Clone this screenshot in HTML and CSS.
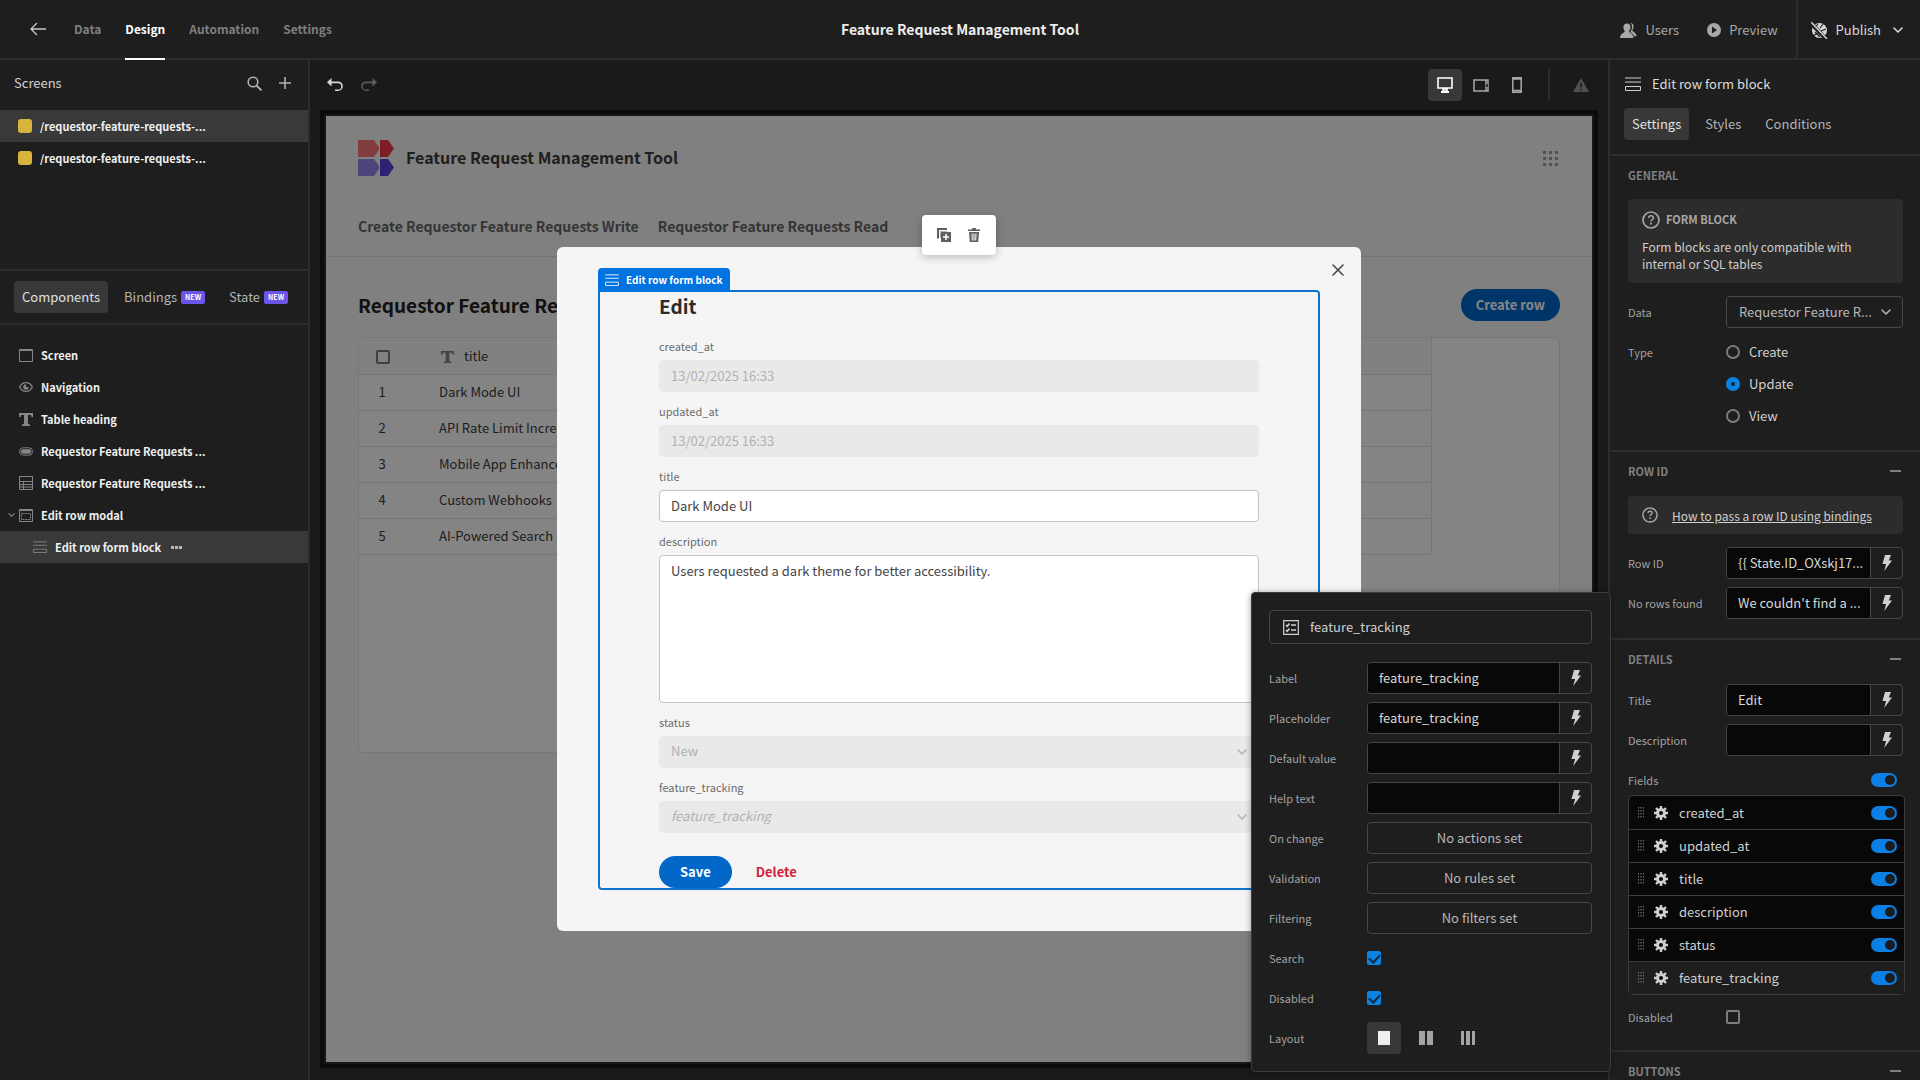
FILE: index.html
```html
<!DOCTYPE html>
<html lang="en">
<head>
<meta charset="UTF-8">
<meta name="viewport" content="width=device-width, initial-scale=1">
<title>Feature Request Management Tool</title>
<link rel="stylesheet" href="styles.css">
</head>
<body>
<!-- shared icons -->
<svg class="sprite" aria-hidden="true">
	<symbol id="i-bolt" viewBox="0 0 12 16"><path d="M4 0h6L7.8 5.500H11L3.200 16l1.900-7H1.500z" fill="currentColor"/></symbol>
	<symbol id="i-chevron" viewBox="0 0 10 6"><path d="M1 1l4 4 4-4" fill="none" stroke="currentColor" stroke-width="1.6" stroke-linecap="round" stroke-linejoin="round"/></symbol>
	<symbol id="i-block" viewBox="0 0 16 14"><path d="M0 1h16M0 5h16M.5 9.5h15v4H.5z" fill="none" stroke="currentColor"/></symbol>
	<symbol id="i-gear" viewBox="0 0 14 14"><path d="M7 0v14M0 7h14M2 2l10 10M12 2L2 12" stroke="currentColor" stroke-width="2.4"/><circle cx="7" cy="7" r="3.6" fill="none" stroke="currentColor" stroke-width="2.8"/><circle cx="7" cy="7" r="2" fill="#080808"/></symbol>
	<symbol id="i-grip" viewBox="0 0 6 12"><path d="M.5 0v12M3 0v12M5.500 0v12" stroke="currentColor" stroke-width="1.200" stroke-dasharray="1.600 1.400" fill="none"/></symbol>
	<symbol id="i-help" viewBox="0 0 18 18"><circle cx="9" cy="9" r="8" fill="none" stroke="currentColor" stroke-width="1.7"/><path d="M6.600 6.900C6.700 5.500 7.700 4.800 9 4.800C10.500 4.800 11.400 5.600 11.400 6.800C11.400 8.500 9 8.500 9 10.500" fill="none" stroke="currentColor" stroke-width="1.500"/><path d="M8.100 11.700h1.800v1.800H8.100z" fill="currentColor"/></symbol>
	<symbol id="i-text" viewBox="0 0 14 13"><path d="M0 0h14v4h-1.500L12 2H9v9l2 .6V13H3v-1.400l2-.6V2H2l-.5 2H0z" fill="currentColor"/></symbol>
</svg>

<header class="topbar">
	<nav class="topnav">
		<a href="#" class="back" aria-label="Back"><svg width="16" height="14" viewBox="0 0 16 14"><path d="M7 1L1 7l6 6M1 7h15" fill="none" stroke="currentColor" stroke-width="1.300"/></svg></a>
		<a href="#">Data</a>
		<a href="#" class="active">Design</a>
		<a href="#">Automation</a>
		<a href="#">Settings</a>
	</nav>
	<h1>Feature Request Management Tool</h1>
	<div class="top-actions">
		<button type="button"><svg width="17" height="15" viewBox="0 0 17 15"><path d="M10.500 0c2 0 3 1.500 3 3.500 0 1.800-.8 3-1.200 3.700 0 1.600 4 2 4.200 6H14c-.6-3-3.500-3-3.500-4.800C11.500 7 12 5.500 12 3.800 12 2 11.500.9 10.500 0zM7 .5c2.300 0 3.500 1.500 3.500 3.600S9.500 7.500 9 8c0 2 4 2 4.500 7H0c.3-5 4.800-5 4.800-7C4.300 7.500 3.400 6.200 3.400 4.100S4.700.5 7 .5z" fill="currentColor"/></svg>Users</button>
		<button type="button"><svg width="14" height="14" viewBox="0 0 14 14"><circle cx="7" cy="7" r="7" fill="currentColor"/><path d="M5 3.500l5 3.500-5 3.500z" fill="#1e1e1e"/></svg>Preview</button>
		<button type="button" class="publish"><svg width="17" height="17" viewBox="0 0 17 17"><circle cx="8.500" cy="8.500" r="7.500" fill="currentColor"/><path d="M3 7l4-5M9 6l3-4M4 10l5 5M10 9l5-2M7 11l-5 3" stroke="#1e1e1e" stroke-width="1.200"/><path d="M0 1l15 16" stroke="#1e1e1e" stroke-width="4"/><path d="M0 0l16 17" stroke="currentColor" stroke-width="1.500"/></svg>Publish<svg class="chev" width="10" height="6"><use href="#i-chevron"/></svg></button>
	</div>
</header>

<div class="workspace">
	<aside class="left">
		<section class="screens">
			<div class="panel-head">
				<h2>Screens</h2>
				<button type="button" aria-label="Search"><svg width="15" height="15" viewBox="0 0 15 15"><circle cx="6" cy="6" r="4.800" fill="none" stroke="currentColor" stroke-width="1.600"/><path d="M9.500 9.500l5 5" stroke="currentColor" stroke-width="1.800"/></svg></button>
				<button type="button" aria-label="Add screen"><svg width="12" height="12" viewBox="0 0 12 12"><path d="M6 0v12M0 6h12" stroke="currentColor" stroke-width="1.600"/></svg></button>
			</div>
			<a href="#" class="screen selected"><i></i>/requestor-feature-requests-...</a>
			<a href="#" class="screen"><i></i>/requestor-feature-requests-...</a>
		</section>
		<div class="tabs left-tabs">
			<button type="button" class="tab on">Components</button>
			<button type="button" class="tab">Bindings<b class="new">NEW</b></button>
			<button type="button" class="tab">State<b class="new">NEW</b></button>
		</div>
		<div class="tree">
			<a href="#" class="node"><svg width="14" height="13" viewBox="0 0 14 13"><path d="M.5.5h13v12H.5zM0 1.500h14" fill="none" stroke="currentColor"/></svg>Screen</a>
			<a href="#" class="node"><svg width="14" height="10" viewBox="0 0 14 10"><path d="M.7 5C2 2 4.500.7 7 .7S12 2 13.300 5C12 8 9.500 9.300 7 9.300S2 8 .7 5z" fill="none" stroke="currentColor" stroke-width="1.300"/><path d="M7 2.200A2.800 2.800 0 1 0 9.800 5H7z" fill="currentColor"/></svg>Navigation</a>
			<a href="#" class="node"><svg width="14" height="13"><use href="#i-text"/></svg>Table heading</a>
			<a href="#" class="node"><svg width="14" height="9" viewBox="0 0 15 9"><rect x=".5" y=".5" width="14" height="8" rx="4" fill="none" stroke="currentColor"/><rect x="2" y="2" width="11" height="5" rx="2.500" fill="currentColor"/></svg>Requestor Feature Requests ...</a>
			<a href="#" class="node"><svg width="14" height="14" viewBox="0 0 14 14"><path d="M.5.5h13v13H.5zM0 5.500h14M0 8.500h14M0 11h14M4.500 5.500v8" fill="none" stroke="currentColor"/></svg>Requestor Feature Requests ...</a>
			<a href="#" class="node"><svg class="twist" width="5" height="3"><use href="#i-chevron"/></svg><svg width="14" height="13" viewBox="0 0 14 13"><path d="M.5.5h13v12H.5zM0 1.500h14" fill="none" stroke="currentColor"/><path d="M2.500 4.500h9v6h-9z" fill="none" stroke="currentColor" stroke-dasharray="2 1"/></svg>Edit row modal</a>
			<a href="#" class="node child selected"><svg width="14" height="12"><use href="#i-block"/></svg>Edit row form block<svg class="more" width="11" height="3" viewBox="0 0 11 3"><path d="M0 0h3v3H0zM4 0h3v3H4zM8 0h3v3H8z" fill="currentColor"/></svg></a>
		</div>
	</aside>

	<main class="canvas">
		<div class="canvas-bar">
			<button type="button" aria-label="Undo"><svg width="16" height="14" viewBox="0 0 16 14"><path d="M4.500 0L0 4.200l4.500 4.200V5.200H11a3.200 3.200 0 0 1 0 6.400H8V13h3a4.800 4.800 0 0 0 0-9.600H4.500z" fill="currentColor"/></svg></button>
			<button type="button" class="dim" aria-label="Redo"><svg width="16" height="14" viewBox="0 0 16 14"><path d="M11.500 0L16 4.200l-4.500 4.200V5.200H5a3.200 3.200 0 0 0 0 6.400h3V13H5a4.800 4.800 0 0 1 0-9.600h6.500z" fill="currentColor"/></svg></button>
			<span class="spacer"></span>
			<button type="button" class="device on" aria-label="Desktop"><svg width="16" height="16" viewBox="0 0 16 16"><path d="M1 1h14v10H1zM6 12h4v2H6z" fill="none" stroke="currentColor" stroke-width="1.600"/><path d="M4 14h8v2H4z" fill="currentColor"/></svg></button>
			<button type="button" class="device" aria-label="Tablet"><svg width="16" height="13" viewBox="0 0 16 13"><path d="M1 1h14v11H1zM13 1v11" fill="none" stroke="currentColor" stroke-width="1.500"/><circle cx="14" cy="6.500" r="1.200" fill="#1a1a1a"/></svg></button>
			<button type="button" class="device" aria-label="Mobile"><svg width="10" height="16" viewBox="0 0 10 16"><path d="M.8.8h8.400v14.400H.8zM1 2h8M1 13.500h8" fill="none" stroke="currentColor" stroke-width="1.500"/></svg></button>
			<span class="bar-line"></span>
			<svg class="warn" width="16" height="14" viewBox="0 0 16 14"><path d="M8 0l8 14H0z" fill="currentColor"/><path d="M8 5v4.500M8 10.700v1.800" stroke="#1a1a1a" stroke-width="1.600"/></svg>
		</div>

		<div class="preview">
			<div class="app">
				<header class="app-head">
					<div class="brand">
						<svg width="36" height="36" viewBox="0 0 36 36"><path d="M0 0h16l5 7v3l-5 7H0z" fill="#f97777"/><path d="M22 0h8l6 8.500-6 8.500h-8z" fill="#f23a46"/><path d="M0 19h16l5 7v3l-5 7H0z" fill="#9387ef"/><path d="M22 19h8l6 8.500-6 8.500h-8z" fill="#5b41dc"/></svg>
						<h2>Feature Request Management Tool</h2>
						<svg class="apps" width="15" height="15" viewBox="0 0 15 15"><path d="M0 1.500h15M0 7.500h15M0 13.500h15" stroke="currentColor" stroke-width="3" stroke-dasharray="3 3"/></svg>
					</div>
					<nav class="app-nav">
						<a href="#">Create Requestor Feature Requests Write</a>
						<a href="#">Requestor Feature Requests Read</a>
					</nav>
				</header>
				<div class="app-title">
					<h3>Requestor Feature Requests</h3>
					<button type="button" class="pill">Create row</button>
				</div>
				<div class="grid">
					<table>
						<thead>
							<tr><th class="num"><input type="checkbox" class="box" aria-label="Select all rows"></th><th><svg width="13" height="12"><use href="#i-text"/></svg>title</th></tr>
						</thead>
						<tbody>
							<tr><td class="num">1</td><td>Dark Mode UI</td></tr>
							<tr><td class="num">2</td><td>API Rate Limit Increase</td></tr>
							<tr><td class="num">3</td><td>Mobile App Enhancements</td></tr>
							<tr><td class="num">4</td><td>Custom Webhooks</td></tr>
							<tr><td class="num">5</td><td>AI-Powered Search</td></tr>
						</tbody>
					</table>
				</div>
			</div>

			<div class="overlay">
				<div class="modal">
					<button type="button" class="close" aria-label="Close"><svg width="12" height="12" viewBox="0 0 12 12"><path d="M1 1l10 10M11 1L1 11" stroke="currentColor" stroke-width="1.600" stroke-linecap="round"/></svg></button>
					<div class="quick">
						<button type="button" aria-label="Duplicate"><svg width="14" height="14" viewBox="0 0 14 14"><path d="M0 0h10v2H2v8.500H0z" fill="currentColor"/><path d="M3 3h7v1H4v6H3z" fill="currentColor" opacity=".5"/><path d="M4 4h10v10H4z" fill="currentColor"/><path d="M9 6v6M6 9h6" stroke="#fff" stroke-width="1.500"/></svg></button>
						<button type="button" aria-label="Delete block"><svg width="12" height="14" viewBox="0 0 12 14"><path d="M0 1.500h3.500L4.500 0h3l1 1.500H12V3H0zM1 4h10l-.8 10H1.800z" fill="currentColor"/><path d="M4 5.500l.3 7M6 5.500v7M8 5.500l-.3 7" stroke="#fff"/></svg></button>
					</div>
					<form class="block">
						<span class="block-tag"><svg width="14" height="12"><use href="#i-block"/></svg>Edit row form block</span>
						<h3>Edit</h3>
						<label for="created">created_at</label>
						<input id="created" type="text" value="13/02/2025 16:33" disabled>
						<label for="updated">updated_at</label>
						<input id="updated" type="text" value="13/02/2025 16:33" disabled>
						<label for="title">title</label>
						<input id="title" type="text" value="Dark Mode UI">
						<label for="desc">description</label>
						<textarea id="desc">Users requested a dark theme for better accessibility.</textarea>
						<label for="status">status</label>
						<div class="pick"><select id="status" disabled><option>New</option></select><svg width="10" height="6"><use href="#i-chevron"/></svg></div>
						<label for="tracking">feature_tracking</label>
						<div class="pick"><select id="tracking" class="empty" disabled><option>feature_tracking</option></select><svg width="10" height="6"><use href="#i-chevron"/></svg></div>
						<div class="form-buttons">
							<button type="button" class="pill">Save</button>
							<button type="button" class="delete">Delete</button>
						</div>
					</form>
				</div>
			</div>
		</div>
	</main>

	<aside class="right">
		<div class="right-head"><svg width="16" height="14"><use href="#i-block"/></svg><h2>Edit row form block</h2></div>
		<div class="tabs right-tabs">
			<button type="button" class="tab on">Settings</button>
			<button type="button" class="tab">Styles</button>
			<button type="button" class="tab">Conditions</button>
		</div>
		<section class="group general">
			<h3>GENERAL</h3>
			<div class="info">
				<strong><svg width="18" height="18"><use href="#i-help"/></svg>FORM BLOCK</strong>
				<p>Form blocks are only compatible with internal or SQL tables</p>
			</div>
			<div class="prop">
				<label for="data">Data</label>
				<div class="pick dark"><select id="data"><option>Requestor Feature R...</option></select><svg width="10" height="6"><use href="#i-chevron"/></svg></div>
			</div>
			<div class="prop top">
				<span class="name">Type</span>
				<div class="radios">
					<label><input type="radio" name="type">Create</label>
					<label><input type="radio" name="type" checked>Update</label>
					<label><input type="radio" name="type">View</label>
				</div>
			</div>
		</section>
		<section class="group rowid">
			<h3>ROW ID<svg width="11" height="2"><path d="M0 1h11" stroke="currentColor" stroke-width="2"/></svg></h3>
			<div class="info link"><svg width="16" height="16"><use href="#i-help"/></svg><a href="#">How to pass a row ID using bindings</a></div>
			<div class="prop"><label for="rowid">Row ID</label><div class="bind"><input id="rowid" type="text" value="{{ State.ID_OXskj17..."><button type="button" aria-label="Bind row ID"><svg width="12" height="16"><use href="#i-bolt"/></svg></button></div></div>
			<div class="prop"><label for="norows">No rows found</label><div class="bind"><input id="norows" type="text" value="We couldn't find a ..."><button type="button" aria-label="Bind no rows found"><svg width="12" height="16"><use href="#i-bolt"/></svg></button></div></div>
		</section>
		<section class="group details">
			<h3>DETAILS<svg width="11" height="2"><path d="M0 1h11" stroke="currentColor" stroke-width="2"/></svg></h3>
			<div class="prop"><label for="ftitle">Title</label><div class="bind"><input id="ftitle" type="text" value="Edit"><button type="button" aria-label="Bind title"><svg width="12" height="16"><use href="#i-bolt"/></svg></button></div></div>
			<div class="prop"><label for="fdesc">Description</label><div class="bind"><input id="fdesc" type="text"><button type="button" aria-label="Bind description"><svg width="12" height="16"><use href="#i-bolt"/></svg></button></div></div>
			<div class="fields-head"><label for="allfields">Fields</label><input type="checkbox" class="switch" id="allfields" checked></div>
			<ul class="fields">
				<li><svg class="grip" width="6" height="12"><use href="#i-grip"/></svg><svg width="14" height="14"><use href="#i-gear"/></svg><label for="f1">created_at</label><input type="checkbox" class="switch" id="f1" checked></li>
				<li><svg class="grip" width="6" height="12"><use href="#i-grip"/></svg><svg width="14" height="14"><use href="#i-gear"/></svg><label for="f2">updated_at</label><input type="checkbox" class="switch" id="f2" checked></li>
				<li><svg class="grip" width="6" height="12"><use href="#i-grip"/></svg><svg width="14" height="14"><use href="#i-gear"/></svg><label for="f3">title</label><input type="checkbox" class="switch" id="f3" checked></li>
				<li><svg class="grip" width="6" height="12"><use href="#i-grip"/></svg><svg width="14" height="14"><use href="#i-gear"/></svg><label for="f4">description</label><input type="checkbox" class="switch" id="f4" checked></li>
				<li><svg class="grip" width="6" height="12"><use href="#i-grip"/></svg><svg width="14" height="14"><use href="#i-gear"/></svg><label for="f5">status</label><input type="checkbox" class="switch" id="f5" checked></li>
				<li class="current"><svg class="grip" width="6" height="12"><use href="#i-grip"/></svg><svg width="14" height="14"><use href="#i-gear"/></svg><label for="f6">feature_tracking</label><input type="checkbox" class="switch" id="f6" checked></li>
			</ul>
			<div class="prop"><label for="formdis">Disabled</label><div><input type="checkbox" class="box" id="formdis"></div></div>
		</section>
		<section class="group">
			<h3>BUTTONS<svg width="11" height="2"><path d="M0 1h11" stroke="currentColor" stroke-width="2"/></svg></h3>
		</section>
	</aside>

	<!-- settings of the selected field, opens over the canvas -->
	<div class="popover">
		<div class="field-name"><svg width="16" height="15" viewBox="0 0 16 15"><path d="M.7.7h14.600v13.600H.7z" fill="none" stroke="currentColor" stroke-width="1.200"/><path d="M3 5l1.200 1.200L6.500 3.500M3 10l1.200 1.200L6.500 8.500M8 5h5M8 10h5" fill="none" stroke="currentColor" stroke-width="1.600"/></svg>feature_tracking</div>
		<div class="prop"><label for="plabel">Label</label><div class="bind"><input id="plabel" type="text" value="feature_tracking"><button type="button" aria-label="Bind label"><svg width="12" height="16"><use href="#i-bolt"/></svg></button></div></div>
		<div class="prop"><label for="pplace">Placeholder</label><div class="bind"><input id="pplace" type="text" value="feature_tracking"><button type="button" aria-label="Bind placeholder"><svg width="12" height="16"><use href="#i-bolt"/></svg></button></div></div>
		<div class="prop"><label for="pdef">Default value</label><div class="bind"><input id="pdef" type="text"><button type="button" aria-label="Bind default value"><svg width="12" height="16"><use href="#i-bolt"/></svg></button></div></div>
		<div class="prop"><label for="phelp">Help text</label><div class="bind"><input id="phelp" type="text"><button type="button" aria-label="Bind help text"><svg width="12" height="16"><use href="#i-bolt"/></svg></button></div></div>
		<div class="prop"><span class="name">On change</span><button type="button" class="outline">No actions set</button></div>
		<div class="prop"><span class="name">Validation</span><button type="button" class="outline">No rules set</button></div>
		<div class="prop"><span class="name">Filtering</span><button type="button" class="outline">No filters set</button></div>
		<div class="prop"><label for="psearch">Search</label><div><input type="checkbox" class="box" id="psearch" checked></div></div>
		<div class="prop"><label for="pdis">Disabled</label><div><input type="checkbox" class="box" id="pdis" checked></div></div>
		<div class="prop"><span class="name">Layout</span>
			<div class="layouts">
				<button type="button" class="on" aria-label="One column"><svg width="12" height="14"><path d="M0 0h12v14H0z" fill="currentColor"/></svg></button>
				<button type="button" aria-label="Two columns"><svg width="14" height="14"><path d="M0 0h6v14H0zM8 0h6v14H8z" fill="currentColor"/></svg></button>
				<button type="button" aria-label="Three columns"><svg width="14" height="14"><path d="M0 0h3v14H0zM5 0h4v14H5zM11 0h3v14h-3z" fill="currentColor"/></svg></button>
			</div>
		</div>
	</div>
</div>
</body>
</html>
```
FILE: styles.css
```css
* {
	box-sizing: border-box;
}

body {
	margin: 0;
	height: 100vh;
	display: flex;
	flex-direction: column;
	overflow: hidden;
	background: #1e1e1e;
	color: #d0d0d0;
	font-family: "Noto Sans CJK SC", "Noto Sans", sans-serif;
	font-size: 13px;
	line-height: 18px;
}

h1, h2, h3, p, ul {
	margin: 0;
	padding: 0;
	font-weight: normal;
}

a {
	color: inherit;
	text-decoration: none;
}

button, input, select, textarea {
	margin: 0;
	padding: 0;
	border: 0;
	background: none;
	color: inherit;
	font: inherit;
	appearance: none;
}

button {
	display: inline-flex;
	align-items: center;
	justify-content: center;
}

svg {
	display: block;
	flex: none;
}

.sprite {
	position: absolute;
	width: 0;
	height: 0;
}

/* top bar */
.topbar {
	display: grid;
	grid-template-columns: 1fr auto 1fr;
	flex: none;
	height: 60px;
	border-bottom: 2px solid #2c2c2c;
}

.topbar h1 {
	align-self: center;
	padding-bottom: 2px;
	color: #ededed;
	font-size: 14px;
	font-weight: bold;
}

.topnav {
	display: flex;
	gap: 24px;
	padding-left: 30px;
	color: #7e7e7e;
	font-size: 12px;
	font-weight: bold;
}

.topnav a {
	display: flex;
	align-items: center;
	height: 60px;
	border-bottom: 2px solid transparent;
}

.topnav .back {
	width: 20px;
	color: #c8c8c8;
}

.topnav .active {
	color: #fff;
	border-color: #fff;
}

.top-actions {
	display: flex;
	justify-content: flex-end;
	color: #a8a8a8;
}

.top-actions button {
	gap: 8px;
	margin-right: 28px;
}

.top-actions button:nth-child(2) {
	margin-right: 18px;
}

.top-actions .publish {
	margin: 0;
	padding: 0 17px 0 13px;
	border-left: 2px solid #2c2c2c;
	color: #d8d8d8;
}

.publish .chev {
	margin-left: 4px;
}

.workspace {
	position: relative;
	display: flex;
	flex: 1;
	min-height: 0;
}

/* left panel */
.left {
	flex: none;
	width: 310px;
	border-right: 2px solid #2c2c2c;
}

.screens {
	height: 211px;
	border-bottom: 2px solid #2c2c2c;
}

.panel-head {
	display: flex;
	align-items: center;
	gap: 17px;
	height: 50px;
	padding: 0 17px 4px 14px;
	color: #b0b0b0;
}

.panel-head h2 {
	flex: 1;
	color: #d4d4d4;
	font-size: 13px;
}

.screen, .node {
	display: flex;
	align-items: center;
	height: 32px;
	color: #f0f0f0;
	font-size: 11px;
	font-weight: bold;
}

.screen {
	gap: 8px;
	padding-left: 18px;
}

.screen i {
	width: 14px;
	height: 14px;
	border-radius: 3px;
	background: #d8b43c;
}

.selected {
	background: #393939;
}

.tabs {
	display: flex;
	border-bottom: 2px solid #2c2c2c;
}

.tab {
	height: 32px;
	padding: 0 8px;
	border-radius: 4px;
	color: #b4b4b4;
}

.tab.on {
	background: #383838;
	color: #e0e0e0;
}

.left-tabs {
	gap: 8px;
	padding: 10px 14px;
}

.new {
	margin-left: 4px;
	padding: 0 4px;
	border-radius: 2px;
	background: #6a55e8;
	color: #fff;
	font-size: 7px;
	line-height: 13px;
}

.tree {
	padding-top: 14px;
}

.node {
	gap: 8px;
	padding-left: 19px;
}

.node svg {
	color: #868686;
}

.node .twist {
	margin: 0 -4px 0 -11px;
	width: 7px;
	height: 4px;
}

.node.child {
	padding-left: 33px;
}

.node .more {
	margin-left: 2px;
	color: #b8b8b8;
}

/* canvas */
.canvas {
	flex: 1;
	display: flex;
	flex-direction: column;
	min-width: 0;
	padding: 0 10px 12px;
	background: #1a1a1a;
}

.canvas-bar {
	display: flex;
	align-items: center;
	flex: none;
	height: 50px;
	padding: 0 9px 0 7px;
	color: #a0a0a0;
}

.canvas-bar button {
	margin-right: 18px;
	color: #d8d8d8;
}

.canvas-bar .dim {
	color: #5c5c5c;
}

.spacer {
	flex: 1;
}

.canvas-bar .device {
	width: 34px;
	height: 32px;
	margin: 0 0 0 2px;
	border-radius: 4px;
	color: #a8a8a8;
}

.canvas-bar .device.on {
	background: #383838;
	color: #fff;
}

.bar-line {
	width: 2px;
	height: 32px;
	margin: 0 23px 0 14px;
	background: #2c2c2c;
}

.warn {
	color: #505050;
}

.preview {
	position: relative;
	flex: 1;
	min-height: 0;
	margin: 4px;
	border: 2px solid #171717;
	background: #f5f5f5;
	box-shadow: 0 0 0 4px #0b0b0b;
	color: #333;
}

.app-head {
	height: 141px;
	padding: 24px 32px 0;
	border-bottom: 1px solid #dcdcdc;
}

.brand {
	display: flex;
	align-items: center;
	gap: 12px;
}

.brand h2 {
	flex: 1;
	padding-bottom: 2px;
	color: #3c3c3c;
	font-size: 16px;
	font-weight: bold;
}

.apps {
	margin-right: 2px;
	color: #9c9c9c;
}

.app-nav {
	display: flex;
	gap: 19px;
	padding-top: 41px;
	color: #666;
	font-size: 14px;
	font-weight: bold;
}

.app-title {
	display: flex;
	align-items: center;
	justify-content: space-between;
	padding: 32px 32px 16px;
}

.app-title h3 {
	color: #222;
	font-size: 19px;
	font-weight: bold;
}

.pill {
	height: 32px;
	padding: 0 15px;
	border-radius: 16px;
	background: #0167c9;
	color: #fff;
	font-weight: bold;
}

.grid {
	height: 416px;
	margin: 0 32px;
	border: 1px solid #e4e4e4;
	border-radius: 4px;
	background: #fefefe;
}

.grid table {
	width: 1073px;
	max-width: 100%;
	border-collapse: collapse;
	border-right: 1px solid #e2e2e2;
	color: #3a3a3a;
}

.grid th, .grid td {
	height: 36px;
	padding: 0 8px;
	border-bottom: 1px solid #e2e2e2;
	text-align: left;
	font-weight: normal;
}

.grid th {
	background: #f8f8f8;
}

.grid th svg {
	display: inline-block;
	margin: 0 10px 0 2px;
	vertical-align: middle;
	color: #858585;
}

.grid .num {
	width: 72px;
	padding: 0 26px 0 0;
	text-align: center;
}

.grid th.num {
	padding-right: 24px;
}

.overlay {
	position: absolute;
	inset: 0;
	display: flex;
	align-items: center;
	justify-content: center;
	background: rgba(0, 0, 0, 0.48);
}

.modal {
	position: relative;
	width: 804px;
	max-width: 95%;
	padding: 43px 41px 41px;
	border-radius: 6px;
	background: #f5f5f5;
}

.close {
	position: absolute;
	top: 17px;
	right: 17px;
	color: #484848;
}

.quick {
	position: absolute;
	top: -32px;
	left: 365px;
	display: flex;
	align-items: center;
	justify-content: center;
	gap: 17px;
	width: 74px;
	height: 40px;
	padding-right: 2px;
	border-radius: 4px;
	background: #fff;
	color: #5f5f5f;
	box-shadow: 0 2px 8px rgba(0, 0, 0, 0.25);
}

/* the selected block is outlined in the builder's blue */
.block {
	position: relative;
	display: flex;
	flex-direction: column;
	padding: 0 59px;
	border: 2px solid #0d73cf;
	border-radius: 0 4px 4px 4px;
}

.block-tag {
	position: absolute;
	left: -2px;
	bottom: 100%;
	display: flex;
	align-items: center;
	gap: 7px;
	height: 24px;
	padding: 0 7px;
	border-radius: 4px 4px 0 0;
	background: #0073e0;
	color: #fff;
	font-size: 10px;
	font-weight: bold;
}

.block h3 {
	padding-bottom: 14px;
	color: #2c2c2c;
	font-size: 19px;
	font-weight: bold;
	line-height: 27px;
}

.block label {
	height: 33px;
	padding-top: 10px;
	color: #6c6c6c;
	font-size: 11px;
}

.block h3 + label {
	height: 27px;
	padding-top: 4px;
}

.block input, .block textarea, .block select {
	width: 100%;
	height: 32px;
	padding: 0 11px 2px;
	border: 1px solid #c4c4c4;
	border-radius: 4px;
	background: #fff;
	color: #444;
}

.block textarea {
	height: 148px;
	padding-top: 6px;
	resize: none;
}

.block input:disabled, .block select:disabled {
	border-color: #e9e9e9;
	background: #e9e9e9;
	color: #b1b1b1;
	opacity: 1;
}

.block select.empty {
	font-style: italic;
}

.pick {
	display: grid;
	align-items: center;
}

.pick select, .pick svg {
	grid-area: 1 / 1;
}

.pick svg {
	justify-self: end;
	margin-right: 12px;
	color: #b4b4b4;
	pointer-events: none;
}

.form-buttons {
	display: flex;
	gap: 24px;
	padding-top: 23px;
}

.form-buttons .pill {
	padding: 0 21px;
}

.delete {
	color: #d31f3c;
	font-weight: bold;
}

/* right panel */
.right {
	flex: none;
	width: 312px;
	border-left: 2px solid #2c2c2c;
	overflow: hidden;
}

.right-head {
	display: flex;
	align-items: center;
	gap: 11px;
	height: 48px;
	padding-left: 15px;
}

.right-head h2 {
	color: #dcdcdc;
	font-size: 13px;
}

.right-tabs {
	gap: 8px;
	padding: 0 14px 14px;
}

.group {
	padding: 0 17px 0 18px;
	border-bottom: 2px solid #2c2c2c;
}

.group h3 {
	display: flex;
	align-items: center;
	justify-content: space-between;
	height: 40px;
	padding: 0 2px 2px 0;
	color: #808080;
	font-size: 11px;
	font-weight: bold;
}

.info {
	margin: 3px 0 13px;
	padding: 11px 14px;
	border-radius: 4px;
	background: #2c2c2c;
	color: #cfcfcf;
	font-size: 12px;
	line-height: 17px;
}

.info strong {
	display: flex;
	align-items: center;
	gap: 6px;
	height: 19px;
	margin-bottom: 9px;
	color: #a6a6a6;
	font-size: 11px;
}

.info.link {
	display: flex;
	align-items: center;
	gap: 14px;
	height: 38px;
	margin: 4px 0 13px;
}

.info svg {
	color: #a6a6a6;
}

.info a {
	text-decoration: underline;
}

.prop {
	display: grid;
	grid-template-columns: 98px 1fr;
	align-items: center;
	min-height: 32px;
	margin-bottom: 8px;
}

.prop > label, .name, .fields-head label {
	color: #a2a2a2;
	font-size: 11px;
}

.prop .box, .fields .switch {
	display: block;
}

.prop.top {
	align-items: start;
}

.prop.top .name {
	line-height: 32px;
}

.pick.dark select {
	width: 100%;
	height: 32px;
	padding: 0 30px 0 12px;
	border: 1px solid #4a4a4a;
	border-radius: 4px;
	color: #b8b8b8;
}

.radios label {
	display: flex;
	align-items: center;
	gap: 9px;
	height: 32px;
}

.radios input {
	width: 14px;
	height: 14px;
	border: 2px solid #7c7c7c;
	border-radius: 50%;
}

.radios input:checked {
	border: 5px solid #0a84e4;
}

.general {
	padding-bottom: 10px;
}

.rowid {
	padding-bottom: 11px;
}

.details {
	padding-bottom: 9px;
}

.details h3 {
	margin-bottom: 4px;
}

.bind {
	display: flex;
	min-width: 0;
	height: 32px;
	border: 1px solid #464646;
	border-radius: 4px;
	overflow: hidden;
}

.bind input {
	flex: 1;
	min-width: 0;
	padding: 0 0 1px 11px;
	background: #080808;
	color: #d8d8d8;
}

.bind button {
	width: 32px;
	border-left: 1px solid #464646;
	color: #d0d0d0;
}

.fields-head {
	display: flex;
	align-items: center;
	justify-content: space-between;
	height: 31px;
	padding-right: 6px;
}

.switch {
	width: 26px;
	height: 14px;
	padding: 2px;
	border-radius: 7px;
	background: #0a7fe4;
}

.switch::after {
	content: "";
	display: block;
	width: 10px;
	height: 10px;
	margin-left: auto;
	border-radius: 50%;
	background: #1c1c1c;
}

.fields {
	margin: 0 -2px 6px 0;
	border: 1px solid #3c3c3c;
	border-radius: 4px;
	background: #080808;
	list-style: none;
}

.fields li {
	display: flex;
	align-items: center;
	height: 33px;
	padding: 0 7px 0 9px;
}

.fields li + li {
	border-top: 1px solid #3c3c3c;
}

.fields .current {
	background: #1e1e1e;
}

.grip {
	margin-right: 10px;
	color: #6c6c6c;
}

.fields label {
	flex: 1;
	margin-left: 11px;
}

.box {
	width: 14px;
	height: 14px;
	border: 2px solid #7c7c7c;
	border-radius: 2px;
	vertical-align: middle;
}

.prop .box:checked {
	border: 0;
	background: #0a84e4;
}

.box:checked::after {
	content: "";
	display: block;
	width: 5px;
	height: 9px;
	margin: 1px auto;
	border: solid #12263a;
	border-width: 0 2px 2px 0;
	transform: rotate(42deg);
}

.popover {
	position: absolute;
	right: 309px;
	bottom: 8px;
	width: 360px;
	padding: 17px 18px 9px 17px;
	border: 1px solid #3c3c3c;
	border-radius: 4px;
	background: #1e1e1e;
	box-shadow: 0 1px 6px rgba(0, 0, 0, 0.4);
}

.field-name {
	display: flex;
	align-items: center;
	gap: 11px;
	height: 34px;
	margin-bottom: 18px;
	padding-left: 13px;
	border: 1px solid #464646;
	border-radius: 4px;
}

.outline {
	height: 32px;
	border: 1px solid #464646;
	border-radius: 4px;
	color: #b8b8b8;
}

.layouts {
	display: flex;
	gap: 8px;
}

.layouts button {
	width: 34px;
	height: 32px;
	border-radius: 4px;
	color: #a4a4a4;
}

.layouts .on {
	background: #383838;
	color: #efefef;
}
```
